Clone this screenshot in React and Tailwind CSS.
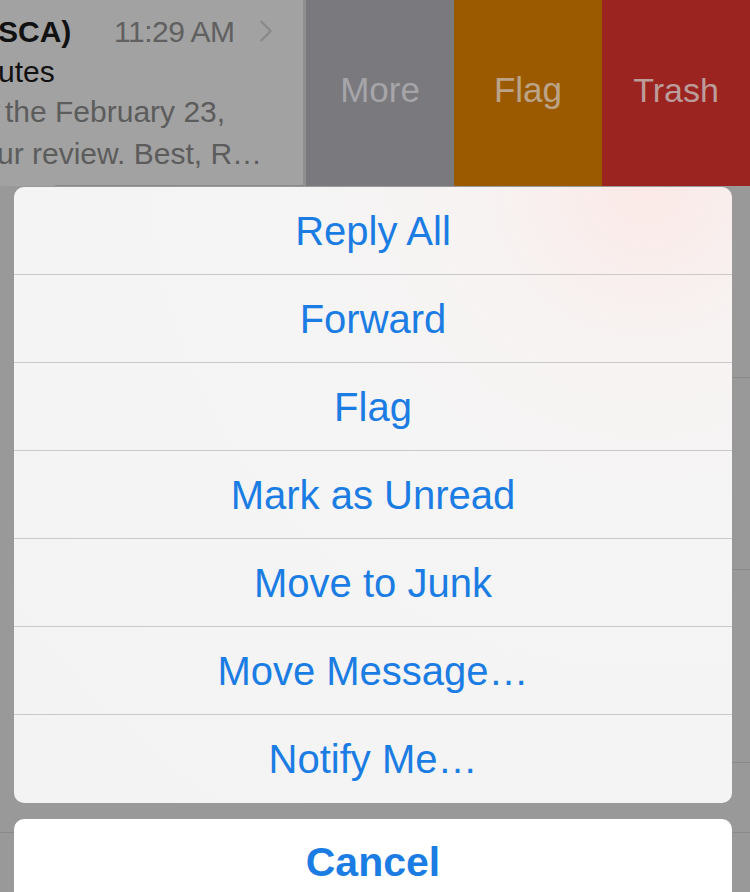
import { ChevronRight } from "lucide-react";

const actions = [
  "Reply All",
  "Forward",
  "Flag",
  "Mark as Unread",
  "Move to Junk",
  "Move Message…",
  "Notify Me…",
];

const font = { fontFamily: '"Liberation Sans", Arial, sans-serif' };

export default function App() {
  return (
    <div className="relative w-[750px] h-[892px] overflow-hidden bg-[#999999]" style={font}>
      {/* swiped mail cell */}
      <div className="flex h-[186px]">
        <div className="relative w-[306px] h-full overflow-hidden bg-[#a2a2a2] border-r-[3px] border-[#8f8f8f]">
          <div className="pt-[12px] text-[30px] leading-[40px] whitespace-nowrap">
            <div className="flex items-center">
              <span className="w-[116px] -ml-[2px] font-bold text-[#111111]">SCA)</span>
              <span className="text-[#606060] tracking-[-0.5px]">11:29 AM</span>
              <ChevronRight size={38} strokeWidth={1.4} className="ml-[12px] -mt-[2px] text-[#8a8a8a]" />
            </div>
            <div className="-ml-[2px] text-[#111111]">utes</div>
            <div className="ml-[5px] text-[#5c5c5c]">the February 23,</div>
            <div className="-ml-[3px] mt-[2px] text-[#5c5c5c]">ur review. Best, R…</div>
          </div>
          <div className="absolute bottom-0 left-[55px] right-0 h-px bg-[#8a8a8a]" />
        </div>
        <div className="w-[148px] flex items-center justify-center bg-[#7a797e] text-[35px] text-[#a6a6aa] pb-[6px]">
          More
        </div>
        <div className="w-[148px] flex items-center justify-center bg-[#9b5a00] text-[35px] text-[#bba489] pb-[6px]">
          Flag
        </div>
        <div className="w-[148px] flex items-center justify-center bg-[#9b2420] text-[34px] text-[#bc9c9b] pb-[6px]">
          Trash
        </div>
      </div>

      {/* list rows behind the sheet */}
      <div className="h-[192px] border-b border-[#8a8a8a] ml-[55px]" />
      <div className="h-[192px] border-b border-[#8a8a8a] ml-[55px]" />
      <div className="h-[193px] border-b border-[#8a8a8a] ml-[55px]" />
      <div className="h-[70px] border-b border-[#8a8a8a]" />

      {/* action sheet */}
      <div className="absolute top-[187px] left-[14px] w-[718px] rounded-[10px] overflow-hidden bg-[radial-gradient(ellipse_at_88%_0%,#fbe9e7_0%,#f7f3f2_18%,#f5f5f5_40%,#f3f3f3_100%)]">
        {actions.map((label, i) => (
          <div
            key={label}
            className={`h-[88px] flex items-center justify-center text-[40px] text-[#1b7de3] ${
              i < actions.length - 1 ? "border-b border-[#c9c9c9]" : ""
            }`}
          >
            {label}
          </div>
        ))}
      </div>

      <div className="absolute top-[819px] left-[14px] w-[718px] h-[88px] rounded-[10px] bg-white flex items-center justify-center text-[41px] font-bold text-[#1b7de3]">
        Cancel
      </div>
    </div>
  );
}
